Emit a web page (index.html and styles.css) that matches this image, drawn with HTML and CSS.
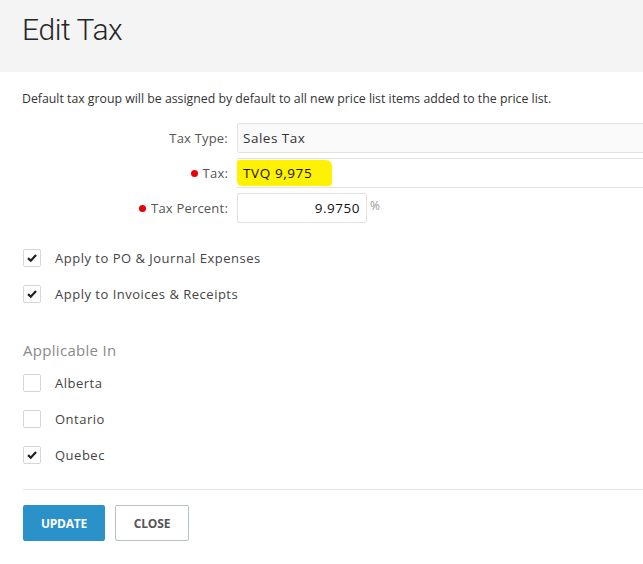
FILE: index.html
```html
<!DOCTYPE html>
<html lang="en">
<head>
    <meta charset="UTF-8">
    <meta name="viewport" content="width=device-width, initial-scale=1.0">
    <title>Edit Tax</title>
    <link rel="stylesheet" href="styles.css">
</head>
<body>
    <div class="modal-header">
        <h1>Edit Tax</h1>
    </div>

    <div class="modal-body">
        <p class="note">Default tax group will be assigned by default to all new price list items added to the price list.</p>

        <div class="form-grid">
            <label class="form-label">Tax Type:</label>
            <div class="field field-readonly">Sales Tax</div>

            <label class="form-label"><span class="req"></span>Tax:</label>
            <div class="field field-plain"><span class="marker">TVQ 9,975</span></div>

            <label class="form-label"><span class="req"></span>Tax Percent:</label>
            <div class="percent-wrap">
                <div class="field field-number">9.9750</div>
                <span class="unit">%</span>
            </div>
        </div>

        <div class="check-list">
            <div class="check-row">
                <span class="checkbox checked"><svg viewBox="0 0 17 17"><path d="M4.3 8.6 L7.2 11.4 L12.8 5.4"/></svg></span>
                <span class="check-label">Apply to PO &amp; Journal Expenses</span>
            </div>
            <div class="check-row">
                <span class="checkbox checked"><svg viewBox="0 0 17 17"><path d="M4.3 8.6 L7.2 11.4 L12.8 5.4"/></svg></span>
                <span class="check-label">Apply to Invoices &amp; Receipts</span>
            </div>
        </div>

        <h2 class="section-title">Applicable In</h2>

        <div class="check-list">
            <div class="check-row">
                <span class="checkbox"></span>
                <span class="check-label">Alberta</span>
            </div>
            <div class="check-row">
                <span class="checkbox"></span>
                <span class="check-label">Ontario</span>
            </div>
            <div class="check-row">
                <span class="checkbox checked"><svg viewBox="0 0 17 17"><path d="M4.3 8.6 L7.2 11.4 L12.8 5.4"/></svg></span>
                <span class="check-label">Quebec</span>
            </div>
        </div>

        <div class="modal-footer">
            <button class="btn btn-primary">UPDATE</button>
            <button class="btn btn-default">CLOSE</button>
        </div>
    </div>
</body>
</html>
```

FILE: styles.css
```css
body {
    margin: 0;
    background: #fff;
    color: #333;
    font-family: "Open Sans", Arial, sans-serif;
    overflow: hidden;
}
.modal-header {
    height: 72px;
    background: #f4f4f4;
    padding: 0 22px;
    box-sizing: border-box;
}
.modal-header h1 {
    margin: 0;
    padding-top: 12px;
    font-family: Roboto, "Liberation Sans", Arial, sans-serif;
    font-weight: 300;
    font-size: 30px;
    line-height: 36px;
    color: #262626;
    letter-spacing: -0.4px;
}
.modal-body {
    padding: 20px 0 0 23px;
}
.note {
    margin: 0 0 17px -1px;
    font-family: "Open Sans", Arial, sans-serif;
    font-size: 12.3px;
    line-height: 14px;
    color: #333;
}
.form-grid {
    display: grid;
    grid-template-columns: 205px 1fr;
    column-gap: 9px;
    row-gap: 5px;
    margin-right: -20px;
}
.form-label {
    display: flex;
    align-items: center;
    justify-content: flex-end;
    font-size: 13px;
    color: #555;
    letter-spacing: 0.2px;
}
.req {
    width: 7px;
    height: 7px;
    border-radius: 50%;
    background: #e8000b;
    margin-right: 5px;
}
.field {
    height: 30px;
    box-sizing: border-box;
    display: flex;
    align-items: center;
    font-size: 13.5px;
    color: #333;
}
.field-readonly {
    background: #fafafa;
    border: 1px solid #e2e2e2;
    border-radius: 2px;
    padding-left: 5px;
    letter-spacing: 0.5px;
}
.field-plain {
    border-top: 1px solid #e2e2e2;
    border-bottom: 1px solid #e2e2e2;
}
.marker {
    background: #fff200;
    color: #111;
    height: 26px;
    display: flex;
    align-items: center;
    padding: 0 20px 0 6px;
    border-radius: 2px 6px 3px 5px;
    letter-spacing: 0.6px;
}
.percent-wrap {
    display: flex;
    align-items: flex-start;
}
.field-number {
    width: 130px;
    border: 1px solid #e2e2e2;
    border-radius: 2px;
    justify-content: flex-end;
    padding-right: 6px;
    color: #111;
    letter-spacing: 0.5px;
}
.unit {
    margin: 4px 0 0 3px;
    font-size: 12px;
    color: #999;
}
.check-list {
    display: flex;
    flex-direction: column;
    gap: 18px;
    margin-top: 26px;
}
.check-row {
    display: flex;
    align-items: center;
    gap: 14px;
    height: 18px;
}
.checkbox {
    width: 18px;
    height: 18px;
    box-sizing: border-box;
    border: 1px solid #d6d6d6;
    border-radius: 2px;
    background: #fff;
    display: block;
    flex: none;
}
.checkbox svg {
    display: block;
    width: 16px;
    height: 16px;
}
.checkbox path {
    fill: none;
    stroke: #222;
    stroke-width: 2.4;
}
.check-label {
    font-size: 13px;
    color: #444;
    letter-spacing: 0.5px;
}
.section-title {
    margin: 38px 0 0 0;
    font-size: 15px;
    font-weight: normal;
    color: #8a8a8a;
    line-height: 18px;
    letter-spacing: 0.3px;
}
.section-title + .check-list {
    margin-top: 15px;
}
.modal-footer {
    margin-top: 25px;
    border-top: 1px solid #e6e6e6;
    padding-top: 15px;
    display: flex;
    gap: 10px;
}
.btn {
    height: 36px;
    box-sizing: border-box;
    border-radius: 2px;
    font-family: "Open Sans", Arial, sans-serif;
    font-weight: bold;
    font-size: 12px;
    letter-spacing: -0.2px;
    cursor: pointer;
}
.btn-primary {
    width: 82px;
    background: #2a91c9;
    border: 1px solid #2a91c9;
    color: #fff;
}
.btn-default {
    width: 74px;
    background: #fff;
    border: 1px solid #b8c2c8;
    color: #555;
}
```
